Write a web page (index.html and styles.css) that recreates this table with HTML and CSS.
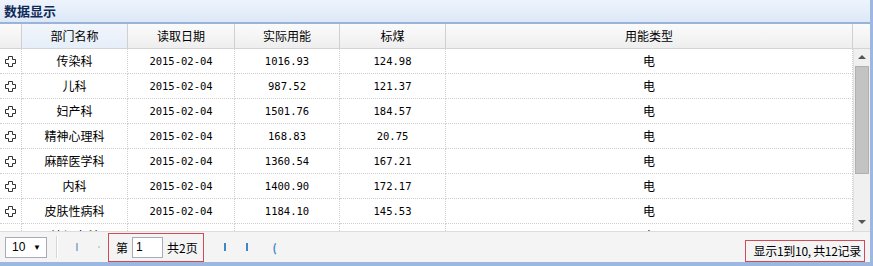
FILE: index.html
```html
<!DOCTYPE html>
<html lang="zh-CN">
<head>
<meta charset="utf-8">
<link rel="stylesheet" href="styles.css">
</head>
<body>
<div class="panel">
  <div class="title">数据显示</div>
  <div class="grid-head">
    <div class="hc"></div>
    <div class="hc sorted">部门名称</div>
    <div class="hc">读取日期</div>
    <div class="hc">实际用能</div>
    <div class="hc">标煤</div>
    <div class="hc">用能类型</div>
    <div class="hc last"></div>
  </div>
  <div class="grid-body">
    <div class="rows">
      <div class="row"><div class="c exp"><svg width="11" height="11" viewBox="0 0 11 11"><path d="M3.5 0.5h4v3h3v4h-3v3h-4v-3h-3v-4h3z" fill="#fff" stroke="#333"/></svg></div><div class="c">传染科</div><div class="c num">2015-02-04</div><div class="c num">1016.93</div><div class="c num">124.98</div><div class="c kind">电</div></div>
      <div class="row"><div class="c exp"><svg width="11" height="11" viewBox="0 0 11 11"><path d="M3.5 0.5h4v3h3v4h-3v3h-4v-3h-3v-4h3z" fill="#fff" stroke="#333"/></svg></div><div class="c">儿科</div><div class="c num">2015-02-04</div><div class="c num">987.52</div><div class="c num">121.37</div><div class="c kind">电</div></div>
      <div class="row"><div class="c exp"><svg width="11" height="11" viewBox="0 0 11 11"><path d="M3.5 0.5h4v3h3v4h-3v3h-4v-3h-3v-4h3z" fill="#fff" stroke="#333"/></svg></div><div class="c">妇产科</div><div class="c num">2015-02-04</div><div class="c num">1501.76</div><div class="c num">184.57</div><div class="c kind">电</div></div>
      <div class="row"><div class="c exp"><svg width="11" height="11" viewBox="0 0 11 11"><path d="M3.5 0.5h4v3h3v4h-3v3h-4v-3h-3v-4h3z" fill="#fff" stroke="#333"/></svg></div><div class="c">精神心理科</div><div class="c num">2015-02-04</div><div class="c num">168.83</div><div class="c num">20.75</div><div class="c kind">电</div></div>
      <div class="row"><div class="c exp"><svg width="11" height="11" viewBox="0 0 11 11"><path d="M3.5 0.5h4v3h3v4h-3v3h-4v-3h-3v-4h3z" fill="#fff" stroke="#333"/></svg></div><div class="c">麻醉医学科</div><div class="c num">2015-02-04</div><div class="c num">1360.54</div><div class="c num">167.21</div><div class="c kind">电</div></div>
      <div class="row"><div class="c exp"><svg width="11" height="11" viewBox="0 0 11 11"><path d="M3.5 0.5h4v3h3v4h-3v3h-4v-3h-3v-4h3z" fill="#fff" stroke="#333"/></svg></div><div class="c">内科</div><div class="c num">2015-02-04</div><div class="c num">1400.90</div><div class="c num">172.17</div><div class="c kind">电</div></div>
      <div class="row"><div class="c exp"><svg width="11" height="11" viewBox="0 0 11 11"><path d="M3.5 0.5h4v3h3v4h-3v3h-4v-3h-3v-4h3z" fill="#fff" stroke="#333"/></svg></div><div class="c">皮肤性病科</div><div class="c num">2015-02-04</div><div class="c num">1184.10</div><div class="c num">145.53</div><div class="c kind">电</div></div>
      <div class="row"><div class="c exp"><svg width="11" height="11" viewBox="0 0 11 11"><path d="M3.5 0.5h4v3h3v4h-3v3h-4v-3h-3v-4h3z" fill="#fff" stroke="#333"/></svg></div><div class="c">神经内科</div><div class="c num">2015-02-04</div><div class="c num">1022.45</div><div class="c num">125.66</div><div class="c kind">电</div></div>
    </div>
    <div class="scrollbar">
      <div class="arrow up"></div>
      <div class="track"><div class="thumb"></div></div>
      <div class="arrow down"></div>
    </div>
  </div>
  <div class="pager">
    <div class="left">
      <div class="select"><span>10</span><span class="caret">▼</span></div>
      <div class="sep"></div>
      <div class="pbtn dis"><span class="bar"></span></div>
      <div class="pbtn dis"><span class="dot"></span></div>
      <div class="pagebox"><span>第</span><div class="pinput">1</div><span>共2页</span></div>
      <div class="pbtn"><span class="bar blue"></span></div>
      <div class="pbtn"><span class="bar blue"></span></div>
      <div class="pbtn refresh">(</div>
    </div>
    <div class="info">显示1到10, 共12记录</div>
  </div>
</div>
</body>
</html>
```
FILE: styles.css
```css
* { box-sizing: border-box; }
html, body { margin: 0; padding: 0; background: #fff; }
body { font-family: "Noto Sans CJK SC", "DejaVu Sans", sans-serif; font-size: 12px; color: #000; }

.panel {
  width: 873px;
  height: 266px;
  border-right: 3px solid #9cb8e0;
  border-bottom: 4px solid #9cb8e0;
  display: flex;
  flex-direction: column;
  overflow: hidden;
}

.title {
  height: 24px;
  flex: none;
  padding: 0 0 0 4px;
  line-height: 21px;
  font-weight: bold;
  font-size: 13px;
  color: #0f2a56;
  background: linear-gradient(#eef4fd, #dde8f7);
  border-bottom: 2px solid #99b4d8;
}

.grid-head {
  display: grid;
  grid-template-columns: 22px 106px 107px 105px 106px 407px 17px;
  height: 25px;
  flex: none;
  background: linear-gradient(#fbfbfb, #eeeeee);
  border-bottom: 1px solid #d4d4d4;
}
.hc {
  border-right: 1px solid #d0d0d0;
  display: flex;
  align-items: center;
  justify-content: center;
  line-height: 1;
}
.hc.sorted { background: linear-gradient(#f2f6fc, #e6eef9); }
.hc.last { border-right: none; }

.grid-body {
  display: flex;
  height: 182px;
  flex: none;
  overflow: hidden;
}
.rows {
  width: 853px;
  flex: none;
  overflow: hidden;
}
.row {
  display: grid;
  grid-template-columns: 22px 106px 107px 105px 106px 407px;
  height: 25px;
}
.c {
  border-right: 1px dotted #cfcfcf;
  border-bottom: 1px dotted #cfcfcf;
  display: flex;
  align-items: center;
  justify-content: center;
  line-height: 1;
  white-space: nowrap;
  color: #000;
}
.c.kind { color: #000; -webkit-text-fill-color: #000; font-family: "Noto Sans CJK JP", "Noto Sans CJK SC", sans-serif; }
.c.exp { justify-content: flex-start; padding-left: 5px; }
.c.exp svg { display: block; }
.num { font-family: "DejaVu Sans Mono", "Liberation Mono", monospace; font-size: 10.5px; }

.scrollbar {
  width: 17px;
  flex: none;
  display: flex;
  flex-direction: column;
  background: #f0f0f0;
  border-left: 1px solid #e2e2e2;
}
.arrow { height: 17px; flex: none; position: relative; }
.arrow.up::after, .arrow.down::after {
  content: "";
  position: absolute;
  left: 4px;
  width: 0; height: 0;
  border-left: 4px solid transparent;
  border-right: 4px solid transparent;
}
.arrow.up::after { top: 6px; border-bottom: 4px solid #555; }
.arrow.down::after { top: 6px; border-top: 4px solid #555; }
.track { flex: 1; padding: 0 1px; }
.thumb {
  height: 108px;
  background: #c3c3c3;
  border: 1px solid #b0b0b0;
}

.pager {
  flex: 1;
  display: flex;
  align-items: center;
  justify-content: space-between;
  background: #f4f4f4;
  border-top: 1px solid #dcdcdc;
  padding: 0 5px 0 5px;
}
.left { display: flex; align-items: center; height: 100%; }
.select {
  width: 42px;
  height: 21px;
  background: #fff;
  border: 1px solid #a5acb5;
  display: flex;
  align-items: center;
  justify-content: space-between;
  padding: 0 5px 0 6px;
  font-family: "Liberation Sans", sans-serif;
  font-size: 12px;
}
.caret { font-size: 8px; }
.sep {
  width: 2px;
  height: 22px;
  margin: 0 8px 0 9px;
  border-left: 1px solid #d6d6d6;
  border-right: 1px solid #fff;
}
.pbtn {
  width: 22px;
  height: 22px;
  display: flex;
  align-items: center;
  justify-content: center;
}
.bar { width: 2px; height: 8px; background: #9fb8d0; display: block; }
.bar.blue { background: #3f87c9; }
.dot { width: 2px; height: 2px; background: #c8d0d8; display: block; }
.pagebox {
  display: flex;
  align-items: center;
  height: 29px;
  border: 1px solid #d24a55;
  padding: 0 5px 0 7px;
  margin: 0 10px 0 -2px;
  gap: 4px;
}
.pinput {
  width: 31px;
  height: 21px;
  background: #fff;
  border: 1px solid #a5acb5;
  font-family: "Liberation Sans", sans-serif;
  font-size: 12px;
  line-height: 19px;
  padding-left: 3px;
}
.refresh { color: #3f87c9; font-weight: bold; font-size: 11px; margin-left: 6px; }
.info {
  align-self: flex-end;
  height: 22px;
  border: 1px solid #d24a55;
  padding: 0 3px 0 8px;
  line-height: 20px;
  white-space: nowrap;
  font-family: "Noto Sans CJK SC", sans-serif;
  font-size: 12px;
  letter-spacing: -0.3px;
}
```
